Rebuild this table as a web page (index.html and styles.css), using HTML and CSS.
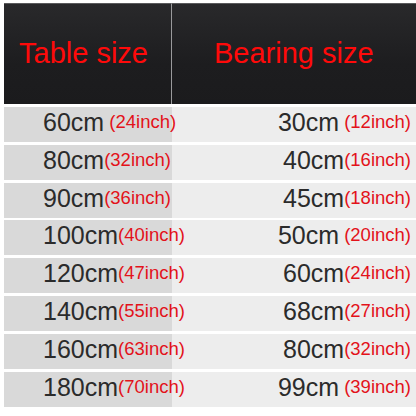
FILE: index.html
```html
<!DOCTYPE html>
<html>
<head>
<meta charset="utf-8">
<link rel="stylesheet" href="styles.css">
</head>
<body>
<div class="sheet">
  <div class="head head-left"><span>Table size</span></div>
  <div class="head head-right"><span>Bearing size</span></div>

  <div class="cell left"><span class="line"><span class="cm">60cm</span><span class="inch"> (24inch)</span></span></div>
  <div class="cell right"><span class="line"><span class="cm">30cm</span><span class="inch"> (12inch)</span></span></div>

  <div class="cell left"><span class="line"><span class="cm">80cm</span><span class="inch">(32inch)</span></span></div>
  <div class="cell right"><span class="line"><span class="cm">40cm</span><span class="inch">(16inch)</span></span></div>

  <div class="cell left"><span class="line"><span class="cm">90cm</span><span class="inch">(36inch)</span></span></div>
  <div class="cell right"><span class="line"><span class="cm">45cm</span><span class="inch">(18inch)</span></span></div>

  <div class="cell left"><span class="line"><span class="cm">100cm</span><span class="inch">(40inch)</span></span></div>
  <div class="cell right"><span class="line"><span class="cm">50cm</span><span class="inch"> (20inch)</span></span></div>

  <div class="cell left"><span class="line"><span class="cm">120cm</span><span class="inch">(47inch)</span></span></div>
  <div class="cell right"><span class="line"><span class="cm">60cm</span><span class="inch">(24inch)</span></span></div>

  <div class="cell left"><span class="line"><span class="cm">140cm</span><span class="inch">(55inch)</span></span></div>
  <div class="cell right"><span class="line"><span class="cm">68cm</span><span class="inch">(27inch)</span></span></div>

  <div class="cell left"><span class="line"><span class="cm">160cm</span><span class="inch">(63inch)</span></span></div>
  <div class="cell right"><span class="line"><span class="cm">80cm</span><span class="inch">(32inch)</span></span></div>

  <div class="cell left"><span class="line"><span class="cm">180cm</span><span class="inch">(70inch)</span></span></div>
  <div class="cell right"><span class="line"><span class="cm">99cm</span><span class="inch"> (39inch)</span></span></div>
</div>
</body>
</html>
```
FILE: styles.css
```css
html, body {
  margin: 0;
  padding: 0;
  background: #ffffff;
}

body {
  width: 416px;
  height: 416px;
  overflow: hidden;
  font-family: "Liberation Sans", Arial, sans-serif;
}

.sheet {
  display: grid;
  grid-template-columns: 168px 1fr;
  grid-template-rows: 101px repeat(8, 35px);
  row-gap: 2.86px;
  padding: 3px 0 0 4px;
}

.head {
  display: flex;
  align-items: center;
  background: linear-gradient(#29292b, #1d1d1f 60%, #1b1b1d);
  border-top: 1px solid #5a5a5c;
  box-sizing: border-box;
  color: #ff0a0a;
  font-size: 29px;
  line-height: 1;
  padding-bottom: 2px;
}

.head-left {
  padding-left: 15px;
  border-right: 1px solid #9a9a9c;
}

.head-right {
  padding-left: 42px;
}

.cell {
  display: flex;
  align-items: center;
  white-space: nowrap;
  box-sizing: border-box;
  padding-bottom: 2px;
}

.line {
  line-height: 25px;
  white-space: pre;
}

.left {
  background: #d9d9d9;
  padding-left: 39px;
  position: relative;
  z-index: 1;
}

.right {
  background: #ededed;
  justify-content: flex-end;
  padding-right: 5px;
}

.cm {
  font-size: 25px;
  color: #2b2b2b;
}

.inch {
  font-size: 18.5px;
  color: #e3121a;
  vertical-align: 3px;
}
```
